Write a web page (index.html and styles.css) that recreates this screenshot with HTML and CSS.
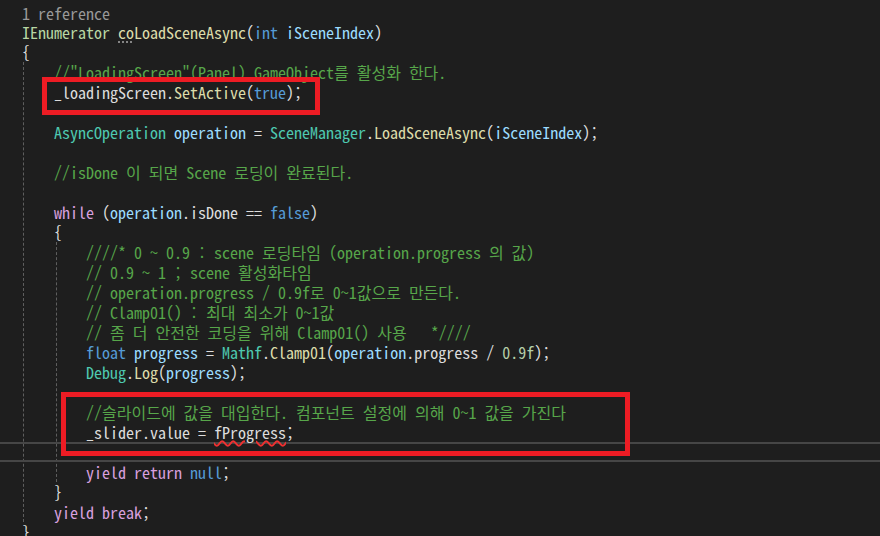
FILE: index.html
```html
<!DOCTYPE html>
<html lang="ko">
<head>
    <meta charset="UTF-8">
    <title>coLoadSceneAsync</title>
    <link rel="stylesheet" href="styles.css">
</head>
<body>
    <div class="editor">
        <div class="lens">1 reference</div>
        <div class="ln"><span class="if">IEnumerator</span> <span class="fn"><span class="hint">co</span>LoadSceneAsync</span>(<span class="kw">int</span> <span class="var">iSceneIndex</span>)</div>
        <div class="ln">{</div>
        <div class="block">
            <div class="ln"><span class="cm">//"LoadingScreen"(Panel) GameObject를 활성화 한다.</span></div>
            <div class="ln">_loadingScreen.<span class="fn">SetActive</span>(<span class="kw">true</span>);</div>
            <div class="ln"></div>
            <div class="ln"><span class="ty">AsyncOperation</span> <span class="var">operation</span> = <span class="ty">SceneManager</span>.<span class="fn">LoadSceneAsync</span>(<span class="var">iSceneIndex</span>);</div>
            <div class="ln"></div>
            <div class="ln"><span class="cm">//isDone 이 되면 Scene 로딩이 완료된다.</span></div>
            <div class="ln"></div>
            <div class="ln"><span class="ctl">while</span> (<span class="var">operation</span>.isDone == <span class="kw">false</span>)</div>
            <div class="ln">{</div>
            <div class="block inner">
                <div class="ln"><span class="cm">////* 0 ~ 0.9 : scene 로딩타임 (operation.progress 의 값)</span></div>
                <div class="ln"><span class="cm">// 0.9 ~ 1 ; scene 활성화타임</span></div>
                <div class="ln"><span class="cm">// operation.progress / 0.9f로 0~1값으로 만든다.</span></div>
                <div class="ln"><span class="cm">// Clamp01() : 최대 최소가 0~1값</span></div>
                <div class="ln"><span class="cm">// 좀 더 안전한 코딩을 위해 Clamp01() 사용   *////</span></div>
                <div class="ln"><span class="kw">float</span> <span class="var">progress</span> = <span class="ty">Mathf</span>.<span class="fn">Clamp01</span>(<span class="var">operation</span>.progress / <span class="num">0.9f</span>);</div>
                <div class="ln"><span class="ty">Debug</span>.<span class="fn">Log</span>(<span class="var">progress</span>);</div>
                <div class="ln"></div>
                <div class="ln"><span class="cm">//슬라이드에 값을 대입한다. 컴포넌트 설정에 의해 0~1 값을 가진다</span></div>
                <div class="ln">_slider.value = <span class="err">fProgress</span>;</div>
                <div class="ln current"></div>
                <div class="ln"><span class="ctl">yield</span> <span class="ctl">return</span> <span class="kw">null</span>;</div>
            </div>
            <div class="ln">}</div>
            <div class="ln"><span class="ctl">yield</span> <span class="ctl">break</span>;</div>
        </div>
        <div class="ln">}</div>

        <div class="mark mark-top"></div>
        <div class="mark mark-bottom"></div>
    </div>
</body>
</html>
```

FILE: styles.css
```css
body {
    margin: 0;
    padding: 0;
    background-color: #1e1e1e;
    overflow: hidden;
}

.editor {
    position: relative;
    height: 536px;
    padding-left: 22px;
    background-color: #1e1e1e;
    color: #dcdcdc;
    font-family: "Noto Sans Mono CJK KR", "Liberation Mono", "Noto Sans CJK KR", monospace;
    font-size: 16px;
}

.lens {
    height: 22px;
    padding-top: 3px;
    box-sizing: border-box;
    line-height: 20px;
    color: #999999;
}

.ln {
    height: 20px;
    line-height: 20px;
    white-space: pre;
}

.block {
    margin-left: 1px;
    padding-left: 30px;
    border-left: 1px dashed #5e5e5e;
}

.block.inner {
    margin-left: 2px;
    padding-left: 29px;
}

.current {
    margin-left: -87px;
    border-top: 2px solid #464646;
    border-bottom: 2px solid #464646;
    box-sizing: border-box;
}

/* syntax colours */
.cm { color: #57a64a; }
.kw { color: #569cd6; }
.ctl { color: #d8a0df; }
.ty { color: #4ec9b0; }
.if { color: #b8d7a3; }
.fn { color: #dcdcaa; }
.var { color: #9cdcfe; }
.num { color: #b5cea8; }

.hint {
    text-decoration: underline dotted #a0a0a0;
    text-underline-offset: 3px;
}

.err {
    text-decoration-line: underline;
    text-decoration-style: wavy;
    text-decoration-color: #f03030;
    text-decoration-thickness: 1.5px;
    text-underline-offset: 1px;
}

/* red annotation boxes drawn over the code */
.mark {
    position: absolute;
    border: 5px solid #ed1c24;
    box-sizing: border-box;
}

.mark-top {
    left: 42px;
    top: 77px;
    width: 278px;
    height: 38px;
}

.mark-bottom {
    left: 61px;
    top: 392px;
    width: 569px;
    height: 64px;
}
```
